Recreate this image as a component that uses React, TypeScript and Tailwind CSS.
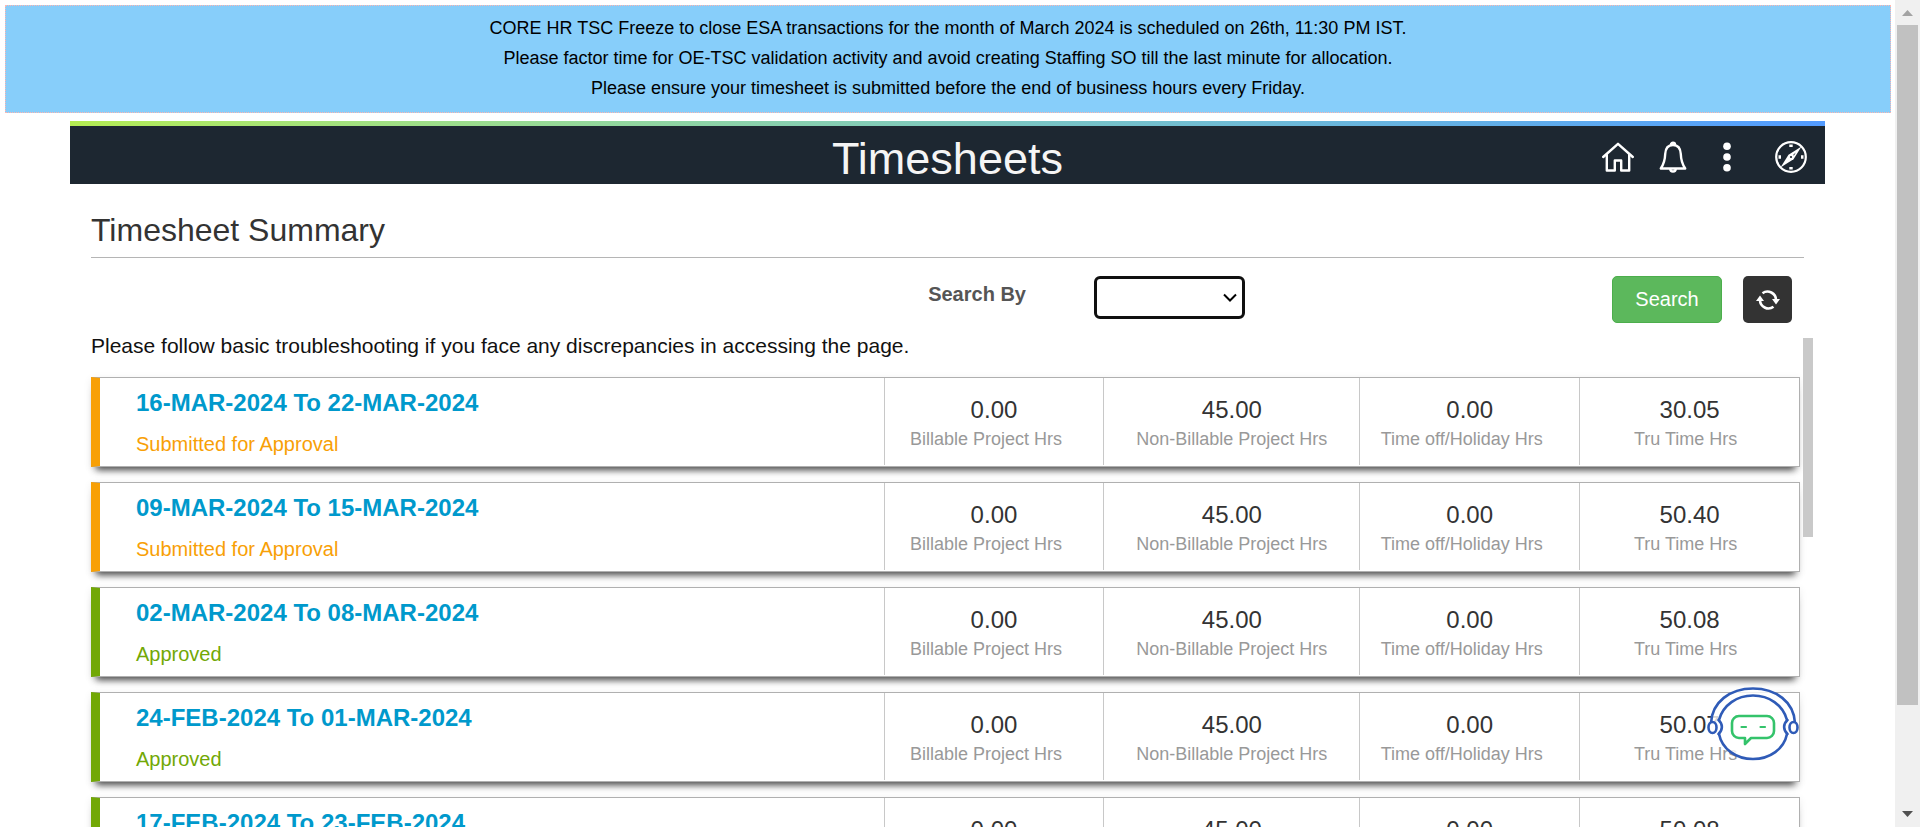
import React from "react";

type Status = "Submitted for Approval" | "Approved";

interface Timesheet {
  period: string;
  status: Status;
  hours: [string, string, string, string];
}

const timesheets: Timesheet[] = [
  { period: "16-MAR-2024 To 22-MAR-2024", status: "Submitted for Approval", hours: ["0.00", "45.00", "0.00", "30.05"] },
  { period: "09-MAR-2024 To 15-MAR-2024", status: "Submitted for Approval", hours: ["0.00", "45.00", "0.00", "50.40"] },
  { period: "02-MAR-2024 To 08-MAR-2024", status: "Approved", hours: ["0.00", "45.00", "0.00", "50.08"] },
  { period: "24-FEB-2024 To 01-MAR-2024", status: "Approved", hours: ["0.00", "45.00", "0.00", "50.07"] },
  { period: "17-FEB-2024 To 23-FEB-2024", status: "Approved", hours: ["0.00", "45.00", "0.00", "50.08"] },
];

const columns = [
  { label: "Billable Project Hrs", pad: "pr-4" },
  { label: "Non-Billable Project Hrs", pad: "" },
  { label: "Time off/Holiday Hrs", pad: "pr-4" },
  { label: "Tru Time Hrs", pad: "pr-2" },
];

const tones: Record<Status, { bar: string; text: string }> = {
  "Submitted for Approval": { bar: "border-l-[#f8a006]", text: "text-[#f8a006]" },
  Approved: { bar: "border-l-[#72a806]", text: "text-[#72a806]" },
};

function Banner() {
  return (
    <div className="border border-dotted border-[#ffb6b0] bg-[#87cefa] pt-[7px] pb-[9px] text-center text-lg leading-[30px] text-black">
      <p>CORE HR TSC Freeze to close ESA transactions for the month of March 2024 is scheduled on 26th, 11:30 PM IST.</p>
      <p>Please factor time for OE-TSC validation activity and avoid creating Staffing SO till the last minute for allocation.</p>
      <p>Please ensure your timesheet is submitted before the end of business hours every Friday.</p>
    </div>
  );
}

function HomeIcon() {
  return (
    <svg viewBox="0 0 32 32" className="size-8" fill="none" stroke="#fff" strokeWidth="2.400" strokeLinecap="round" strokeLinejoin="round">
      <path d="M1.200 16 16 2.800 30.800 16" />
      <path d="M4.800 14V29.500h8V19.500h6.400v10h8V14" />
    </svg>
  );
}

function BellIcon() {
  return (
    <svg viewBox="0 0 32 32" className="size-8" fill="none" stroke="#fff" strokeWidth="2.400" strokeLinejoin="round">
      <path d="M16 4C11 4 8.500 7.500 8.200 13 8 20 6.500 23.500 3.800 27.500h24.400C25.500 23.500 24 20 23.800 13 23.500 7.500 21 4 16 4Z" />
      <path d="M13 4.300a3 3 0 0 1 6 0Z" fill="#fff" stroke="none" />
      <path d="M13.300 28a2.700 2.500 0 0 0 5.400 0M14 3.800a2 2 0 0 1 4 0" />
    </svg>
  );
}

function DotsIcon() {
  return (
    <svg viewBox="0 0 32 32" className="size-8" fill="#fff">
      <circle cx="15" cy="5.200" r="3.800" />
      <circle cx="15" cy="16" r="3.800" />
      <circle cx="15" cy="26.800" r="3.800" />
    </svg>
  );
}

function CompassIcon() {
  return (
    <svg viewBox="0 0 32 32" className="size-8" fill="none" stroke="#fff">
      <circle cx="16" cy="16" r="14.800" strokeWidth="2.200" />
      <path d="M26.500 5.500 18.500 18.300 5.500 26.500 13.500 13.700Z" fill="#fff" stroke="none" />
      <path d="m18.300 13.700 2.500-2.200-2 3.300Z" fill="#1d2731" stroke="none" />
      <circle cx="16" cy="16" r="1.100" fill="#1d2731" stroke="none" />
      <path d="M16 3.500v2.500M16 26v2.500M3.500 16H6M26 16h2.500" strokeWidth="3.400" />
    </svg>
  );
}

function RefreshIcon() {
  return (
    <svg viewBox="0 0 24 22" className="h-[22px] w-6" fill="none" stroke="#fff" strokeWidth="2.600">
      <path d="M6.500 4.200A8.500 8.500 0 0 1 20 11M17.500 17.800A8.500 8.500 0 0 1 4 11" />
      <path d="M16 10h8l-4 5.500ZM0 12h8L4 6.500Z" fill="#fff" stroke="none" />
    </svg>
  );
}

function ChatIcon() {
  return (
    <svg viewBox="0 0 92 74" className="h-[74px] w-[92px]" fill="none" strokeLinecap="round" strokeLinejoin="round">
      <path d="M4 36C5 15 24 1.500 46 1.500S87 15 88 36L80 44C78 60 64 72.500 46 72.500S14 60 12 44Z" fill="#fff" fillOpacity=".8" />
      <g stroke="#2f5bb7" strokeWidth="2.600">
        <path d="M4 36C5 15 23 1.500 46 1.500S87 15 88 36" />
        <path d="M12 33C16 18 30 8.500 46 8.500S76 18 80 33" />
        <path d="M12 47C15 62 29 72 46 72S77 62 80 47" />
        <path d="M11.500 33c4.500 4 4.500 10 0 14M80.500 33c-4.500 4-4.500 10 0 14" />
        <ellipse cx="5.500" cy="40.500" rx="4" ry="5.500" fill="#fff" />
        <ellipse cx="86.500" cy="40.500" rx="4" ry="5.500" fill="#fff" />
      </g>
      <g stroke="#34c36b" strokeWidth="2.600">
        <path d="M32 29h28a7 7 0 0 1 7 7v8a7 7 0 0 1-7 7H44l-6 6V51H32a7 7 0 0 1-7-7v-8a7 7 0 0 1 7-7Z" />
        <path d="M34.500 40h4.500M53.500 40h4.500" strokeWidth="2.200" />
      </g>
    </svg>
  );
}

function Header() {
  return (
    <header>
      <div className="h-[5px] bg-linear-to-r from-[#b4ec51] to-[#539bff]" />
      <div className="grid h-[58px] grid-cols-[1fr_auto_1fr] items-center bg-[#1d2731]">
        <h1 className="col-start-2 pt-2 text-[45px] leading-[50px] text-[#f5f5f5]">Timesheets</h1>
        <nav className="flex items-center justify-end gap-[23px] pt-1 pr-[18px]">
          <button type="button" aria-label="Home"><HomeIcon /></button>
          <button type="button" aria-label="Notifications"><BellIcon /></button>
          <button type="button" aria-label="Actions"><DotsIcon /></button>
          <button type="button" aria-label="Navigator" className="pl-2"><CompassIcon /></button>
        </nav>
      </div>
    </header>
  );
}

function SearchBar() {
  return (
    <form className="grid h-[65px] grid-cols-[1003fr_518fr_auto] items-start pt-[18px] pr-3">
      <label htmlFor="search-by" className="pr-[68px] pt-1.5 text-right text-xl leading-6 font-bold text-[#555]">
        Search By
      </label>
      <div className="relative w-[151px]">
        <select
          id="search-by"
          className="block h-[43px] w-full appearance-none rounded-md border-[3px] border-[#101010] bg-white px-3 text-xl outline-none"
          defaultValue=""
        >
          <option value=""></option>
          <option value="date">Date</option>
          <option value="status">Status</option>
        </select>
        <svg viewBox="0 0 14 10" className="pointer-events-none absolute top-[17px] right-2 h-[10px] w-[14px]" fill="none" stroke="#000" strokeWidth="2">
          <path d="m1 1.500 6 6 6-6" />
        </svg>
      </div>
      <div className="flex gap-[21px]">
        <button type="button" className="h-[47px] w-[110px] rounded-[5px] border border-[#4cae4c] bg-[#5cb85c] pb-0.5 text-xl text-white">
          Search
        </button>
        <button type="button" aria-label="Refresh" className="flex h-[47px] w-[49px] items-center justify-center rounded-[5px] bg-[#333]">
          <RefreshIcon />
        </button>
      </div>
    </form>
  );
}

function TimesheetCard({ sheet }: { sheet: Timesheet }) {
  const tone = tones[sheet.status];
  return (
    <li
      className={`grid h-[90px] grid-cols-[784fr_220fr_256fr_220fr_220fr] border border-l-[9px] border-[#b0b0b0] bg-white pb-px shadow-[0_8px_7px_-5px_rgba(0,0,0,0.7),0_2px_8px_rgba(0,0,0,0.08)] ${tone.bar}`}
    >
      <div className="pt-[9px] pl-9">
        <a href="#timesheet" className="block text-2xl leading-8 font-bold text-[#0099cc]">{sheet.period}</a>
        <p className={`pt-[13px] text-xl leading-6 ${tone.text}`}>{sheet.status}</p>
      </div>
      {columns.map((column, i) => (
        <div key={column.label} className="border-l border-[#c8c8c8] pt-4 text-center">
          <p className="text-2xl leading-8 text-[#333]">{sheet.hours[i]}</p>
          <p className={`text-lg leading-[26px] whitespace-nowrap text-[#999] ${column.pad}`}>{column.label}</p>
        </div>
      ))}
    </li>
  );
}

function PageScrollbar() {
  return (
    <div aria-hidden="true" className="flex w-[25px] shrink-0 flex-col items-center bg-[#f0f0f0]">
      <svg viewBox="0 0 25 25" className="size-[25px] shrink-0" fill="#a3a3a3">
        <path d="M7 16h11l-5.500-6Z" />
      </svg>
      <div className="w-[21px] flex-[680] bg-[#c1c1c1]" />
      <div className="flex-[97]" />
      <svg viewBox="0 0 25 25" className="size-[25px] shrink-0" fill="#505050">
        <path d="M7 9h11l-5.500 6Z" />
      </svg>
    </div>
  );
}

export default function App() {
  return (
    <div className="flex h-screen overflow-hidden bg-white font-['Liberation_Sans',Arial,sans-serif]">
      <div className="min-w-0 flex-1 overflow-hidden pt-[5px] pr-1 pl-[5px]">
        <Banner />
        <div className="mr-[66px] ml-[65px] pt-2">
          <Header />
          <main className="pr-3 pl-[21px]">
            <div className="pr-[9px]">
              <h2 className="border-b border-[#b5b5b5] pt-6 pb-1 text-[32px] leading-[45px] text-[#333]">
                Timesheet Summary
              </h2>
              <SearchBar />
            </div>
            <div className="flex items-start gap-[3px] pt-[15px]">
              <div className="min-w-0 flex-1">
                <p className="text-[21px] leading-4 text-[#111]">
                  Please follow basic troubleshooting if you face any discrepancies in accessing the page.
                </p>
                <ul className="flex flex-col gap-[15px] pt-[23px]">
                  {timesheets.map((sheet) => (
                    <TimesheetCard key={sheet.period} sheet={sheet} />
                  ))}
                </ul>
              </div>
              <div aria-hidden="true" className="h-[199px] w-[10px] shrink-0 bg-[#c9c9c9]" />
            </div>
          </main>
        </div>
      </div>
      <PageScrollbar />
      <button type="button" aria-label="Open chat assistant" className="fixed right-[121px] bottom-[66px]">
        <ChatIcon />
      </button>
    </div>
  );
}
